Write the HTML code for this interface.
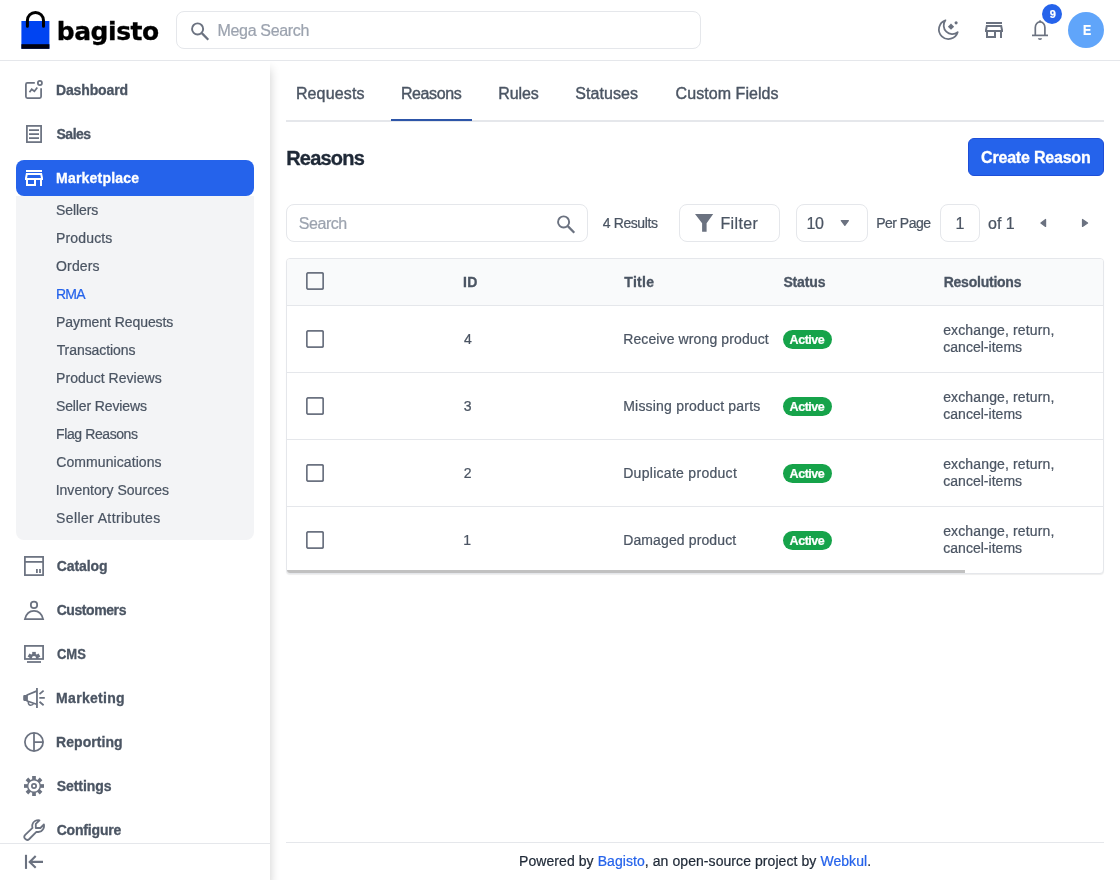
<!DOCTYPE html>
<html lang="en">
<head>
<meta charset="utf-8">
<title>Reasons - Bagisto</title>
<style>
*{box-sizing:border-box;margin:0;padding:0}
html,body{width:1120px;height:880px;overflow:hidden;background:#fff}
body{font-family:"Liberation Sans",sans-serif;color:#4b5563;font-size:14px;position:relative;will-change:transform;-webkit-text-stroke:.22px}
a{text-decoration:none;color:inherit}
svg{display:block}
.t{position:absolute;white-space:nowrap;line-height:1}

/* header */
#hdr{position:absolute;left:0;top:0;width:1120px;height:61px;background:#fff;border-bottom:1px solid #e5e7eb;z-index:5}
#logo-bag{position:absolute;left:19px;top:8px}
#logo-t{left:57px;top:19px;font-size:25px;font-weight:700;color:#000;font-family:"DejaVu Sans","Liberation Sans",sans-serif;-webkit-text-stroke:.3px #000}
#mega{position:absolute;left:176px;top:11px;width:525px;height:38px;border:1px solid #e5e7eb;border-radius:8px;background:#fff}
#mega-ic{position:absolute;left:188.3px;top:18.5px}
#mega-t{left:218px;top:23px;font-size:16px;color:#9ca3af}
.hic{position:absolute;top:18px}
#badge{position:absolute;left:1042px;top:4px;width:20px;height:20px;border-radius:50%;background:#2563eb}
#badge-t{left:1049px;top:9px;color:#fff;font-size:11px;font-weight:700}
#avatar{position:absolute;left:1068px;top:12px;width:36px;height:36px;border-radius:50%;background:#60a5fa}
#avatar-t{left:1082px;top:23px;color:#fff;font-size:14px;font-weight:700;transform:scaleX(.88);transform-origin:0 0}

/* sidebar */
#side{position:absolute;left:0;top:61px;width:270px;height:819px;background:#fff;box-shadow:0 8px 10px 0 rgba(0,0,0,.2);z-index:3}
.mi{position:absolute;left:16px;width:238px;height:36px;border-radius:8px;display:block}
.mi svg{position:absolute;left:6px;top:6px}
.mi span{position:absolute;left:40px;top:11px;font-size:14px;font-weight:700;-webkit-text-stroke:.3px;color:#4b5563;white-space:nowrap;line-height:1}
.mi.act{background:#2563eb}
.mi.act span{color:#fff}
#m-cms{transform:scaleX(.93);transform-origin:0 50%}
#sub{position:absolute;left:16px;top:135px;width:238px;height:344px;background:#f3f4f6;border-radius:0 0 8px 8px}
#sub a{position:absolute;left:40px;font-size:14px;color:#4b5563;white-space:nowrap;line-height:1;display:block}
#sub a.on{color:#2563eb}
#sidebot{position:absolute;left:0;top:782px;width:270px;height:37px;border-top:1px solid #e5e7eb;background:#fff}
#sidebot svg{position:absolute;left:22px;top:6px}

/* content */
#tabline{position:absolute;left:286px;top:120px;width:818px;height:2px;background:#e5e7eb}
.tab{position:absolute;top:86px;font-size:16px;color:#4b5563;white-space:nowrap;line-height:1;-webkit-text-stroke:.4px}
#tabact{position:absolute;left:391px;top:119px;width:81px;height:2px;background:#2d55a8}
#title{left:286px;top:148px;font-size:20px;font-weight:700;color:#1f2937;-webkit-text-stroke:.35px}
#btn{position:absolute;left:968px;top:138px;width:136px;height:38px;border-radius:6px;background:#2563eb;border:1px solid #1d4ed8}
#btn-t{left:981px;top:150px;font-size:16px;font-weight:700;color:#fff;-webkit-text-stroke:.3px}
.box{position:absolute;top:204px;height:38px;border:1px solid #e5e7eb;border-radius:8px;background:#fff}
.tb{color:#4b5563}

/* table */
#tbl{position:absolute;left:286px;top:258px;width:818px;height:316px;border:1px solid #e5e7eb;border-radius:4px;background:#fff;overflow:hidden;box-shadow:0 1px 1px rgba(0,0,0,.07)}
#thead{position:absolute;left:0;top:0;width:816px;height:47px;background:#f9fafb;border-bottom:1px solid #e5e7eb}
.row{position:absolute;left:0;width:816px;height:67px;border-bottom:1px solid #e5e7eb}
.cb{position:absolute;left:19px}
.th{position:absolute;top:16px;font-size:14px;font-weight:700;-webkit-text-stroke:.3px;color:#4b5563;white-space:nowrap;line-height:1}
.td{position:absolute;font-size:14px;color:#4b5563;white-space:nowrap;line-height:1}
.bdg{position:absolute;left:496px;width:49px;height:19px;border-radius:10px;background:#16a34a;color:#fff;font-size:12.5px;text-align:center;line-height:21px;display:block;white-space:nowrap;overflow:hidden}
.bdg b{display:inline-block;font-weight:700}
.res{position:absolute;left:656px;font-size:14px;line-height:17px;color:#4b5563;white-space:nowrap}
.res span{display:inline-block}
#sbar{position:absolute;left:0;top:311px;width:678px;height:4px;background:#c1c1c1}

#foot{position:absolute;left:286px;top:842px;width:818px;height:38px;border-top:1px solid #e5e7eb}
#foot-t{left:519px;top:854px;font-size:14px;color:#1f2937}
#foot-t a{color:#2563eb}
</style>
<style id="ls">
#logo-t{letter-spacing:-0.445px;margin-left:-0.31px}
#mega-t{letter-spacing:-0.316px;margin-left:-0.56px}
#m-dashboard{letter-spacing:-0.141px;margin-left:-0.00px}
#m-sales{letter-spacing:-0.497px;margin-left:0.53px}
#m-marketplace{letter-spacing:0.221px;margin-left:-0.00px}
#m-catalog{letter-spacing:-0.063px;margin-left:0.68px}
#m-customers{letter-spacing:-0.423px;margin-left:0.68px}
#m-cms{letter-spacing:-0.045px;margin-left:0.55px}
#m-marketing{letter-spacing:0.297px;margin-left:0.12px}
#m-reporting{letter-spacing:0.048px;margin-left:0.12px}
#m-settings{letter-spacing:-0.040px;margin-left:0.69px}
#m-configure{letter-spacing:-0.181px;margin-left:0.68px}
#s-sellers{letter-spacing:-0.093px;margin-left:0.00px}
#s-products{letter-spacing:0.140px;margin-left:0.08px}
#s-orders{letter-spacing:0.135px;margin-left:0.09px}
#s-rma{letter-spacing:-0.824px;margin-left:0.08px}
#s-payment-requests{letter-spacing:-0.067px;margin-left:0.08px}
#s-transactions{letter-spacing:-0.063px;margin-left:0.63px}
#s-product-reviews{letter-spacing:0.044px;margin-left:0.08px}
#s-seller-reviews{letter-spacing:-0.130px;margin-left:0.00px}
#s-flag-reasons{letter-spacing:-0.405px;margin-left:0.08px}
#s-communications{letter-spacing:0.074px;margin-left:0.34px}
#s-inventory-sources{letter-spacing:0.033px;margin-left:-0.38px}
#s-seller-attributes{letter-spacing:0.389px;margin-left:0.00px}
#tab-requests{letter-spacing:0.147px;margin-left:-0.14px}
#tab-reasons{letter-spacing:-0.390px;margin-left:-0.14px}
#tab-rules{letter-spacing:-0.075px;margin-left:-0.76px}
#tab-statuses{letter-spacing:0.084px;margin-left:0.14px}
#tab-custom{letter-spacing:0.059px;margin-left:0.58px}
#title{letter-spacing:-0.795px;margin-left:0.17px}
#btn-t{letter-spacing:-0.200px;margin-left:0.06px}
#q-t{letter-spacing:-0.451px;margin-left:-0.19px}
#res-t{letter-spacing:-0.414px;margin-left:0.85px}
#filter-t{letter-spacing:0.372px;margin-left:-0.54px}
#pp-n{letter-spacing:-0.471px;margin-left:-0.49px}
#pp-t{letter-spacing:-0.506px;margin-left:0.21px}
#pg-n{letter-spacing:0.000px;margin-left:0.56px}
#pg-of{letter-spacing:-0.056px;margin-left:0.08px}
#th-id{letter-spacing:0.521px;margin-left:-0.06px}
#th-title{letter-spacing:0.279px;margin-left:1.35px}
#th-status{letter-spacing:-0.126px;margin-left:0.39px}
#th-res{letter-spacing:-0.233px;margin-left:0.68px}
#r0-t{letter-spacing:0.115px;margin-left:0.21px}
#r1-t{letter-spacing:0.202px;margin-left:0.21px}
#r2-t{letter-spacing:0.290px;margin-left:0.21px}
#r3-t{letter-spacing:0.121px;margin-left:0.21px}
#foot-t{letter-spacing:0.071px;margin-left:0.03px}
#badge-t{letter-spacing:0.000px;margin-left:0.72px}
#avatar-t{letter-spacing:0.000px;margin-left:0.84px}
#r0-id{letter-spacing:0.000px;margin-left:1.01px}
#r0-a{letter-spacing:-0.457px;margin-left:-1.07px}
#r0-x1{letter-spacing:0.133px;margin-left:0.20px}
#r0-x2{letter-spacing:0.025px;margin-left:0.25px}
#r1-id{letter-spacing:0.000px;margin-left:0.75px}
#r1-a{letter-spacing:-0.457px;margin-left:-1.07px}
#r1-x1{letter-spacing:0.133px;margin-left:0.20px}
#r1-x2{letter-spacing:0.025px;margin-left:0.25px}
#r2-id{letter-spacing:0.000px;margin-left:0.73px}
#r2-a{letter-spacing:-0.457px;margin-left:-1.07px}
#r2-x1{letter-spacing:0.133px;margin-left:0.20px}
#r2-x2{letter-spacing:0.025px;margin-left:0.25px}
#r3-id{letter-spacing:0.000px;margin-left:0.33px}
#r3-a{letter-spacing:-0.457px;margin-left:-1.07px}
#r3-x1{letter-spacing:0.133px;margin-left:0.20px}
#r3-x2{letter-spacing:0.025px;margin-left:0.25px}
</style>
</head>
<body>

<!-- HEADER -->
<div id="hdr">
  <svg id="logo-bag" width="34" height="44" viewBox="0 0 34 44">
    <rect x="2.4" y="13" width="28" height="27.8" fill="#0044f2"/>
    <rect x="2.4" y="36.2" width="28" height="4.6" fill="#00000f"/>
    <path d="M8.4 18.3V12.45a8.05 8.05 0 0 1 16.1 0V18.3" fill="none" stroke="#000" stroke-width="3" stroke-linecap="round"/>
  </svg>
  <span class="t" id="logo-t">bagisto</span>
  <div id="mega"></div>
  <div id="mega-ic"><svg width="24" height="24" viewBox="0 0 24 24" ><circle cx="9.6" cy="9.9" r="5.55" fill="none" stroke="#6b7280" stroke-width="1.9"/><path d="M13.8 14.1L20.3 20.7" stroke="#6b7280" stroke-width="2.3"/></svg></div>
  <span class="t" id="mega-t">Mega Search</span>
  <div class="hic" style="left:936px"><svg width="24" height="24" viewBox="0 0 24 24" ><path d="M9.45 2.3A9.6 9.6 0 1 0 21.7 14.2A8.6 8.6 0 0 1 9.45 2.3Z" fill="none" stroke="#6b7280" stroke-width="1.75" stroke-linejoin="round"/><path d="M15 5.5l3.15 3.15-3.15 3.15-3.15-3.15z" fill="#6b7280"/><circle cx="20.1" cy="4.85" r="1.55" fill="#6b7280"/></svg></div>
  <div class="hic" style="left:982px"><svg width="24" height="24" viewBox="0 0 24 24" ><path d="M18.36 9l.6 3H5.04l.6-3h12.72M20 4H4v2h16V4zm0 3H4l-1 5v2h1v6h10v-6h4v6h2v-6h1v-2l-1-5zM6 18v-4h6v4H6z" fill="#6b7280"/></svg></div>
  <div class="hic" style="left:1028px"><svg width="24" height="24" viewBox="0 0 24 24" ><path d="M7.3 17.4V9.6A4.8 5.7 0 0 1 16.9 9.6V17.4" fill="none" stroke="#6b7280" stroke-width="1.7"/><circle cx="12.1" cy="3.3" r="1.15" fill="#6b7280"/><path d="M4 17.4H20" stroke="#6b7280" stroke-width="1.7"/><path d="M9.9 20.2h4.2a2.1 1.7 0 0 1-4.2 0z" fill="#6b7280"/></svg></div>
  <div id="badge"></div><span class="t" id="badge-t">9</span>
  <div id="avatar"></div><span class="t" id="avatar-t">E</span>
</div>

<!-- SIDEBAR -->
<div id="side">
  <a class="mi" style="top:11px"><svg width="24" height="24" viewBox="0 0 24 24" ><path d="M12.8 4.9H5.4a1.5 1.5 0 0 0-1.5 1.5V18.5a1.5 1.5 0 0 0 1.5 1.5H17.6a1.5 1.5 0 0 0 1.5-1.5V10.2" fill="none" stroke="#6b7280" stroke-width="1.75"/><circle cx="17.9" cy="5" r="2.05" fill="none" stroke="#6b7280" stroke-width="1.75"/><path d="M7.5 14.2L9.7 11.2 12.4 13.2 15.3 9.5" fill="none" stroke="#6b7280" stroke-width="1.75"/></svg><span id="m-dashboard">Dashboard</span></a><a class="mi" style="top:55px"><svg width="24" height="24" viewBox="0 0 24 24" ><rect x="4.9" y="3.9" width="14.2" height="16.2" fill="none" stroke="#6b7280" stroke-width="1.75"/><path d="M7 8H17M7 12H17M7 16H17" stroke="#6b7280" stroke-width="1.75"/></svg><span id="m-sales">Sales</span></a><a class="mi act" style="top:99px"><svg width="24" height="24" viewBox="0 0 24 24" ><path d="M18.36 9l.6 3H5.04l.6-3h12.72M20 4H4v2h16V4zm0 3H4l-1 5v2h1v6h10v-6h4v6h2v-6h1v-2l-1-5zM6 18v-4h6v4H6z" fill="#fff"/></svg><span id="m-marketplace">Marketplace</span></a><a class="mi" style="top:487px"><svg width="24" height="24" viewBox="0 0 24 24" ><rect x="2.9" y="2.9" width="18.2" height="18.2" fill="none" stroke="#6b7280" stroke-width="1.75"/><path d="M3 7.9H21" stroke="#6b7280" stroke-width="1.75"/><path d="M14.9 15V18.9M18 15V18.9" stroke="#6b7280" stroke-width="1.75"/></svg><span id="m-catalog">Catalog</span></a><a class="mi" style="top:531px"><svg width="24" height="24" viewBox="0 0 24 24" ><circle cx="12" cy="6.9" r="3.2" fill="none" stroke="#6b7280" stroke-width="1.75"/><path d="M2.9 21.1C4.2 15.8 8 12.9 12 12.9S19.8 15.8 21.1 21.1Z" fill="none" stroke="#6b7280" stroke-width="1.75"/></svg><span id="m-customers">Customers</span></a><a class="mi" style="top:575px"><svg width="24" height="24" viewBox="0 0 24 24" ><defs><clipPath id="cmsclip"><rect x="3" y="4" width="18" height="13"/></clipPath></defs><rect x="2.9" y="3.9" width="18.2" height="13.1" fill="none" stroke="#6b7280" stroke-width="1.75"/><path d="M5 20H19" stroke="#6b7280" stroke-width="1.75"/><g clip-path="url(#cmsclip)"><circle cx="12" cy="16.2" r="3.3" fill="none" stroke="#6b7280" stroke-width="2.4"/><rect x="10.2" y="9.9" width="3.6" height="3" fill="#6b7280" transform="rotate(-60 12 16.2)"/><rect x="10.2" y="9.9" width="3.6" height="3" fill="#6b7280" transform="rotate(0 12 16.2)"/><rect x="10.2" y="9.9" width="3.6" height="3" fill="#6b7280" transform="rotate(60 12 16.2)"/></g></svg><span id="m-cms">CMS</span></a><a class="mi" style="top:619px"><svg width="24" height="24" viewBox="0 0 24 24" ><path d="M14.95 2V22" stroke="#6b7280" stroke-width="1.8"/><path d="M2.3 9.1H5.9V14.9H2.3a1.1 1.1 0 0 1-1.1-1.1V10.2a1.1 1.1 0 0 1 1.1-1.1z" fill="#6b7280"/><path d="M4.5 9.3L14.5 5.1M4.5 14.7L14.5 18.3" stroke="#6b7280" stroke-width="1.75"/><path d="M6.3 16C6.2 18.3 7.4 19.4 8.6 19.3 10 19.2 11.2 18.4 11.6 17.5" fill="none" stroke="#6b7280" stroke-width="1.5"/><path d="M17.5 8.1L21.6 4.6M17.3 11.9H22.8M17.5 15.7L21.6 19.2" stroke="#6b7280" stroke-width="1.8"/></svg><span id="m-marketing">Marketing</span></a><a class="mi" style="top:663px"><svg width="24" height="24" viewBox="0 0 24 24" ><circle cx="12" cy="12" r="9.1" fill="none" stroke="#6b7280" stroke-width="1.75"/><path d="M12 3V21M12 12H21" stroke="#6b7280" stroke-width="1.75"/></svg><span id="m-reporting">Reporting</span></a><a class="mi" style="top:707px"><svg width="24" height="24" viewBox="0 0 24 24" ><circle cx="12" cy="12" r="6.3" fill="none" stroke="#6b7280" stroke-width="1.4"/><rect x="10.15" y="2" width="3.7" height="3.9" fill="#6b7280" transform="rotate(0 12 12)"/><rect x="10.15" y="2" width="3.7" height="3.9" fill="#6b7280" transform="rotate(45 12 12)"/><rect x="10.15" y="2" width="3.7" height="3.9" fill="#6b7280" transform="rotate(90 12 12)"/><rect x="10.15" y="2" width="3.7" height="3.9" fill="#6b7280" transform="rotate(135 12 12)"/><rect x="10.15" y="2" width="3.7" height="3.9" fill="#6b7280" transform="rotate(180 12 12)"/><rect x="10.15" y="2" width="3.7" height="3.9" fill="#6b7280" transform="rotate(225 12 12)"/><rect x="10.15" y="2" width="3.7" height="3.9" fill="#6b7280" transform="rotate(270 12 12)"/><rect x="10.15" y="2" width="3.7" height="3.9" fill="#6b7280" transform="rotate(315 12 12)"/><circle cx="12" cy="12" r="2.15" fill="none" stroke="#6b7280" stroke-width="1.7"/></svg><span id="m-settings">Settings</span></a><a class="mi" style="top:751px"><svg width="24" height="24" viewBox="0 0 24 24" ><path d="M17.5 2.3C14.3 1.9 11.2 3.5 10.4 6.5 10.1 7.8 10.2 9 10.5 9.9L3.2 16.9A2.9 2.9 0 0 0 7.3 21L14.4 13.8C16.6 14.3 19.8 13.6 21.3 10.9 22.1 9.4 22.2 7.8 21.9 6.5L18.4 10H13.8V5.9Z" fill="none" stroke="#6b7280" stroke-width="1.8" stroke-linejoin="round"/></svg><span id="m-configure">Configure</span></a>
  <div id="sub"><a id="s-sellers" style="top:7px">Sellers</a><a id="s-products" style="top:35px">Products</a><a id="s-orders" style="top:63px">Orders</a><a id="s-rma" style="top:91px" class="on">RMA</a><a id="s-payment-requests" style="top:119px">Payment Requests</a><a id="s-transactions" style="top:147px">Transactions</a><a id="s-product-reviews" style="top:175px">Product Reviews</a><a id="s-seller-reviews" style="top:203px">Seller Reviews</a><a id="s-flag-reasons" style="top:231px">Flag Reasons</a><a id="s-communications" style="top:259px">Communications</a><a id="s-inventory-sources" style="top:287px">Inventory Sources</a><a id="s-seller-attributes" style="top:315px">Seller Attributes</a></div>
  <div id="sidebot"><svg width="24" height="24" viewBox="0 0 24 24" ><path d="M4 4.8V18.9" stroke="#6b7280" stroke-width="2.1"/><path d="M21 11.9H7.8M13.7 6.1L7.7 11.9 13.7 17.7" fill="none" stroke="#6b7280" stroke-width="2.1"/></svg></div>
</div>

<!-- MAIN -->
<div id="tabline"></div>
<div id="tabact"></div>
<span class="tab" style="left:296px" id="tab-requests">Requests</span>
<span class="tab" style="left:401px" id="tab-reasons">Reasons</span>
<span class="tab" style="left:499px" id="tab-rules">Rules</span>
<span class="tab" style="left:575px" id="tab-statuses">Statuses</span>
<span class="tab" style="left:675px" id="tab-custom">Custom Fields</span>

<span class="t" id="title">Reasons</span>
<div id="btn"></div><span class="t" id="btn-t">Create Reason</span>

<div class="box" style="left:286px;width:302px"></div>
<span class="t" id="q-t" style="left:299px;top:216px;font-size:16px;color:#9ca3af">Search</span>
<div style="position:absolute;left:554px;top:211.6px"><svg width="24" height="24" viewBox="0 0 24 24" ><circle cx="9.6" cy="9.9" r="5.55" fill="none" stroke="#6b7280" stroke-width="1.9"/><path d="M13.8 14.1L20.3 20.7" stroke="#6b7280" stroke-width="2.3"/></svg></div>
<span class="t tb" id="res-t" style="left:602px;top:216px;font-size:14px">4 Results</span>
<div class="box" style="left:679px;width:101px"></div>
<div style="position:absolute;left:692.4px;top:211px"><svg width="24" height="24" viewBox="0 0 24 24" ><path d="M3 3H21.2L14.6 12.2V20.8H10.1V12.2Z" fill="#6b7280"/></svg></div>
<span class="t tb" id="filter-t" style="left:721px;top:216px;font-size:16px">Filter</span>
<div class="box" style="left:796px;width:72px"></div>
<span class="t tb" id="pp-n" style="left:807px;top:216px;font-size:16px">10</span>
<svg style="position:absolute;left:840px;top:219px" width="10" height="8" viewBox="0 0 10 8"><path d="M1.3 1.6H8.4L4.85 6.4z" fill="#6b7280" stroke="#6b7280" stroke-width="1.2" stroke-linejoin="round"/></svg>
<span class="t tb" id="pp-t" style="left:876px;top:215.5px;font-size:14px">Per Page</span>
<div class="box" style="left:940px;width:40px"></div>
<span class="t tb" id="pg-n" style="left:955px;top:216px;font-size:16px">1</span>
<span class="t tb" id="pg-of" style="left:988px;top:216px;font-size:16px">of 1</span>
<svg style="position:absolute;left:1039px;top:218px" width="10" height="10" viewBox="0 0 10 10"><path d="M6.6 1.5V8.5L1.9 5z" fill="#6b7280" stroke="#6b7280" stroke-width="1.2" stroke-linejoin="round"/></svg>
<svg style="position:absolute;left:1080px;top:218px" width="10" height="10" viewBox="0 0 10 10"><path d="M2.5 1.5V8.5L7.6 5z" fill="#6b7280" stroke="#6b7280" stroke-width="1.2" stroke-linejoin="round"/></svg>

<div id="tbl">
  <div id="thead">
    <svg class="cb" style="top:13px" width="18" height="18" viewBox="0 0 18 18"><rect x=".8" y=".8" width="16.4" height="16.4" rx="1.6" fill="none" stroke="#6b7280" stroke-width="1.8"/></svg>
    <span class="th" style="left:176px" id="th-id">ID</span>
    <span class="th" style="left:336px" id="th-title">Title</span>
    <span class="th" style="left:496px" id="th-status">Status</span>
    <span class="th" style="left:656px" id="th-res">Resolutions</span>
  </div>
  <div class="row" style="top:47px">
  <svg class="cb" style="top:24px" width="18" height="18" viewBox="0 0 18 18"><rect x=".8" y=".8" width="16.4" height="16.4" rx="1.6" fill="none" stroke="#6b7280" stroke-width="1.8"/></svg>
  <span class="td" style="left:176px;top:26px" id="r0-id">4</span>
  <span class="td" style="left:336px;top:26px" id="r0-t">Receive wrong product</span>
  <span class="bdg" style="top:24px"><b id="r0-a">Active</b></span>
  <p class="res" style="top:16px"><span id="r0-x1">exchange, return,</span><br><span id="r0-x2">cancel-items</span></p>
</div><div class="row" style="top:114px">
  <svg class="cb" style="top:24px" width="18" height="18" viewBox="0 0 18 18"><rect x=".8" y=".8" width="16.4" height="16.4" rx="1.6" fill="none" stroke="#6b7280" stroke-width="1.8"/></svg>
  <span class="td" style="left:176px;top:26px" id="r1-id">3</span>
  <span class="td" style="left:336px;top:26px" id="r1-t">Missing product parts</span>
  <span class="bdg" style="top:24px"><b id="r1-a">Active</b></span>
  <p class="res" style="top:16px"><span id="r1-x1">exchange, return,</span><br><span id="r1-x2">cancel-items</span></p>
</div><div class="row" style="top:181px">
  <svg class="cb" style="top:24px" width="18" height="18" viewBox="0 0 18 18"><rect x=".8" y=".8" width="16.4" height="16.4" rx="1.6" fill="none" stroke="#6b7280" stroke-width="1.8"/></svg>
  <span class="td" style="left:176px;top:26px" id="r2-id">2</span>
  <span class="td" style="left:336px;top:26px" id="r2-t">Duplicate product</span>
  <span class="bdg" style="top:24px"><b id="r2-a">Active</b></span>
  <p class="res" style="top:16px"><span id="r2-x1">exchange, return,</span><br><span id="r2-x2">cancel-items</span></p>
</div><div class="row" style="top:248px">
  <svg class="cb" style="top:24px" width="18" height="18" viewBox="0 0 18 18"><rect x=".8" y=".8" width="16.4" height="16.4" rx="1.6" fill="none" stroke="#6b7280" stroke-width="1.8"/></svg>
  <span class="td" style="left:176px;top:26px" id="r3-id">1</span>
  <span class="td" style="left:336px;top:26px" id="r3-t">Damaged product</span>
  <span class="bdg" style="top:24px"><b id="r3-a">Active</b></span>
  <p class="res" style="top:16px"><span id="r3-x1">exchange, return,</span><br><span id="r3-x2">cancel-items</span></p>
</div>
  <div id="sbar"></div>
</div>

<div id="foot"></div>
<span class="t" id="foot-t">Powered by <a>Bagisto</a>, an open-source project by <a>Webkul</a>.</span>

</body>
</html>
